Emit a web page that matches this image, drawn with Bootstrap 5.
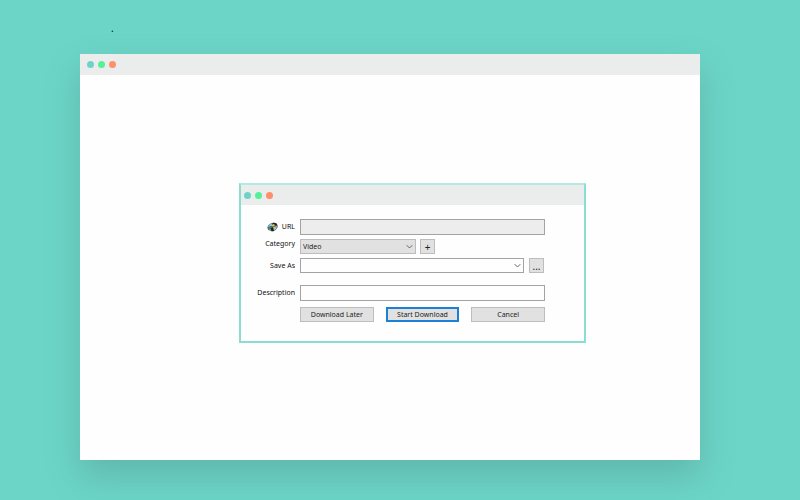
<!DOCTYPE html>
<html lang="en">
<head>
<meta charset="utf-8">
<meta name="viewport" content="width=device-width, initial-scale=1">
<title>Download</title>
<link href="https://cdn.jsdelivr.net/npm/bootstrap@5.3.0/dist/css/bootstrap.min.css" rel="stylesheet">
<style>
  body { background: #6cd5c7; font-family: "Noto Sans", sans-serif; font-size: 7px; line-height: 10px; color: #222; padding: 0 100px 40px 80px; }
  .top-strip { height: 54px; padding: 23px 0 0 31px; font-size: 10px; color: #000; }
  .app-window { background: #fefefe; box-shadow: 0 16px 32px rgba(60, 100, 95, .26); }
  .title-strip { background: #ebedec; height: 21px; padding-left: 7px; gap: 4px; }
  .dot { width: 7px; height: 7px; }
  .dot-teal { background: #6dd3c8; }
  .dot-green { background: #55f09a; }
  .dot-orange { background: #ff8f6b; }
  .desk { padding: 108px 114px 0 159px; }
  .dialog-box { border: 2px solid #8addd0; border-top-color: #b3ebe3; background: #fefefe; }
  .dialog-box .title-strip { padding-left: 3px; height: 20px; }
  .form-area { padding: 14px 39px 19px 0; }
  .line { display: grid; grid-template-columns: 54px minmax(0, 1fr); column-gap: 5px; margin-bottom: 4px; }
  .line label { text-align: right; color: #111; }
  .form-area .form-control, .form-area .form-select { font-size: 7px; line-height: 11px; min-height: 0; padding: 0 2px; border: 1px solid #a3a3a3; border-radius: 0; color: #222; background-color: #fefefe; }
  .form-area .form-control { height: 16px; }
  .form-area .form-control:disabled { background-color: #ededed; }
  .form-area .form-select { height: 15px; padding-right: 12px; background-size: 7px 7px; background-position: right 2px center; background-image: url("data:image/svg+xml,%3Csvg xmlns='http://www.w3.org/2000/svg' viewBox='0 0 7 7'%3E%3Cpath fill='none' stroke='%23666' d='M.7 2.2 3.5 5 6.3 2.2'/%3E%3C/svg%3E"); }
  .form-area .category { width: 116px; background-color: #e1e1e1; border-color: #bcbcbc; }
  .form-area .btn { font-size: 7px; line-height: 12px; height: 15px; padding: 0; border: 1px solid #bdbdbd; border-radius: 0; background: #e1e1e1; color: #222; }
  .form-area .square { width: 15px; font-size: 10px; }
  .form-area .btn.start { border: 2px solid #1a80d8; line-height: 10px; }
  .save-row { padding-right: 1px; gap: 5px; }
  .actions { display: grid; grid-template-columns: repeat(3, minmax(0, 1fr)); column-gap: 12px; margin: 6px 0 0 59px; }
</style>
</head>
<body class="d-flex flex-column min-vh-100">
<div class="top-strip">.</div>
<main class="app-window flex-grow-1">
  <div class="title-strip d-flex align-items-center">
    <span class="dot dot-teal rounded-circle"></span><span class="dot dot-green rounded-circle"></span><span class="dot dot-orange rounded-circle"></span>
  </div>
  <div class="desk">
    <section class="dialog-box">
      <div class="title-strip d-flex align-items-center">
        <span class="dot dot-teal rounded-circle"></span><span class="dot dot-green rounded-circle"></span><span class="dot dot-orange rounded-circle"></span>
      </div>
      <form class="form-area">
        <div class="line align-items-center">
          <label for="url" class="d-flex justify-content-end align-items-center gap-1">
            <svg width="11" height="10" viewBox="0 0 11 10" aria-hidden="true">
              <path d="M.3 5.500Q.8 2.500 4 1.300Q7 0 9.800 1.500Q11 3.500 10.500 5.500Q9 8.500 6 9.500Q4 9.500 3 8.500Q.5 8 .3 5.500Z" fill="#4d626b"/>
              <path d="M1 4.500Q2.500 1.500 6 1L4.500 3.500 1.500 5Z" fill="#9cc4d3"/>
              <path d="M5.500 1Q9 .3 10.200 3L7.500 4 5 3Z" fill="#17242e"/>
              <path d="M3.500 3.500 6.500 2 8.500 3.200 6 4.600Z" fill="#e7bd57"/>
              <path d="M.5 5.500 4 4.200 5.500 5.500 2.500 7.500Z" fill="#2689a5"/>
              <path d="M6 5.300 10.200 4Q9.500 7.500 6.500 9Z" fill="#a9c8aa"/>
              <path d="M3.500 6.300 6 5.300 7 8.900 4.500 9Z" fill="#17221d"/>
              <path d="M1.500 7 3.500 6.700 4.500 8.500Z" fill="#d39a38"/>
            </svg>
            <span>URL</span>
          </label>
          <input id="url" class="form-control" type="text" disabled>
        </div>
        <div class="line">
          <label for="category">Category</label>
          <div class="d-flex gap-1">
            <select id="category" class="form-select category"><option>Video</option></select>
            <button type="button" class="btn square" aria-label="Add category">+</button>
          </div>
        </div>
        <div class="line align-items-center mb-0">
          <label for="save">Save As</label>
          <div class="d-flex save-row">
            <select id="save" class="form-select flex-grow-1 w-auto"><option></option></select>
            <button type="button" class="btn square" aria-label="Browse">...</button>
          </div>
        </div>
        <div class="line align-items-center mb-0 mt-2 pt-1">
          <label for="description">Description</label>
          <input id="description" class="form-control" type="text">
        </div>
        <div class="actions">
          <button type="button" class="btn">Download Later</button>
          <button type="submit" class="btn start">Start Download</button>
          <button type="button" class="btn">Cancel</button>
        </div>
      </form>
    </section>
  </div>
</main>
<script src="https://cdn.jsdelivr.net/npm/bootstrap@5.3.0/dist/js/bootstrap.bundle.min.js"></script>
</body>
</html>
